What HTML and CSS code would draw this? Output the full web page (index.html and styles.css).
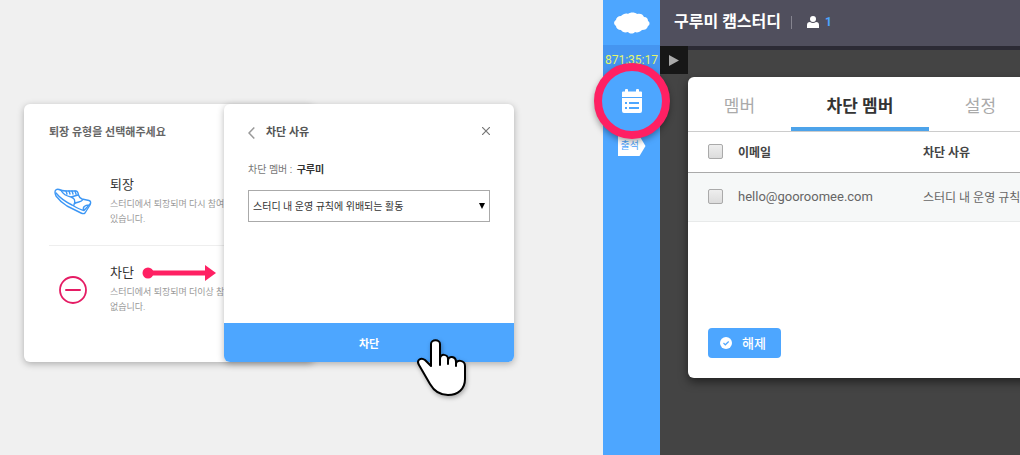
FILE: index.html
```html
<!DOCTYPE html>
<html lang="ko">
<head>
    <meta charset="UTF-8">
    <meta name="viewport" content="width=device-width, initial-scale=1.0">
    <title>구루미 캠스터디</title>
    <link rel="stylesheet" href="styles.css">
</head>
<body>
    <div class="page">
        <section class="guide">
            <div class="card type-card">
                <h2 class="type-title">퇴장 유형을 선택해주세요</h2>
                <div class="type-item">
                    <svg class="type-icon" viewBox="0 0 38 28" fill="none" stroke="#3d97f5" stroke-width="1.4" stroke-linejoin="round" stroke-linecap="round">
                        <path d="M1 4C1 1.500 3 1 5 1.500C8 3 10 3 12 3H22C24 3 24 5 24.500 7C25 9 26 10 28 11L35 12.500C37 13 37 15 36 17L31 25C30 26 29 26 27 25L13 18C8 15 5 12 2 8C1 6 1 5 1 4Z"/>
                        <path d="M2 5C6 10 12 14 18 17C23 20 27 22 30 22.500L36 16M7 2.500C9 6 12 8 17 9C20 10 22 12 20 17M17 9L24 7M30 22.500C28 19 31 17 35 17M20 16C24 13 27 15 29 11.500M12 3L13 6M15 3L16 6M18 3L19 6M21 3L22 6"/>
                    </svg>
                    <div>
                        <h3>퇴장</h3>
                        <p>스터디에서 퇴장되며 다시 참여할 수<br>있습니다.</p>
                    </div>
                </div>
                <div class="type-item">
                    <svg class="type-icon" viewBox="0 0 38 28" fill="none" stroke="#e51c64">
                        <circle cx="19" cy="14" r="13" stroke-width="1.8"/>
                        <path d="M12 14H26" stroke-width="2" stroke-linecap="round"/>
                    </svg>
                    <div>
                        <h3>차단
                            <svg class="arrow" viewBox="0 0 74 16" fill="#ff2063">
                                <circle cx="6" cy="8" r="5.5"/>
                                <path d="M6 5.500H63V0L74 8L63 16V10.500H6Z"/>
                            </svg>
                        </h3>
                        <p>스터디에서 퇴장되며 더이상 참여할 수<br>없습니다.</p>
                    </div>
                </div>
            </div>

            <form class="card reason-card">
                <div class="reason-body">
                    <div class="reason-head">
                        <button type="button" class="icon-btn" aria-label="뒤로">
                            <svg width="7" height="12" viewBox="0 0 7 12" fill="none" stroke="#999" stroke-width="1.5"><path d="M6.300 .5L1 6L6.300 11.500"/></svg>
                        </button>
                        <h2>차단 사유</h2>
                        <button type="button" class="icon-btn close" aria-label="닫기">
                            <svg width="8" height="8" viewBox="0 0 8 8" stroke="#777" stroke-width="1.2"><path d="M0 0L8 8M8 0L0 8"/></svg>
                        </button>
                    </div>
                    <p class="target">차단 멤버 : <strong>구루미</strong></p>
                    <div class="select-box">
                        <select aria-label="차단 사유">
                            <option>스터디 내 운영 규칙에 위배되는 활동</option>
                        </select>
                        <svg class="caret" width="6" height="6" viewBox="0 0 6 6"><path d="M0 0H6L3 6Z"/></svg>
                    </div>
                </div>
                <button type="button" class="block-btn">차단</button>
                <svg class="hand" viewBox="0 0 50 58" fill="#fff" stroke="#000" stroke-width="2" stroke-linejoin="round" stroke-linecap="round">
                    <path d="M14 27V5C14 0 23 0 23 5V26V20C23 14 31 15 31 20V25V22C31 16 39 17 39 23V27V25C39 20 48 21 48 27V40C48 50 41 56 31 56C23 56 17 52 13 45L2 26C-1 21 4 18 8 21Z"/>
                </svg>
            </form>
        </section>

        <section class="app">
            <nav class="sidebar">
                <a href="#" class="logo" aria-label="구루미">
                    <svg width="36" height="22" viewBox="0 0 36 22" fill="#fff">
                        <path d="M7 4C9 2 12 1 14 2C16 0 21 0 23 2C26 1 29 2 30 5C33 5 34 7 34 9C36 10 36 13 34 14C33 17 31 18 28 18C26 20 23 21 21 20C19 22 16 22 14 20C11 21 8 20 7 18C4 18 2 16 2 14C-1 12 0 9 2 8C2 6 4 4 7 4Z"/>
                    </svg>
                </a>
                <div class="timer">871:35:17</div>
                <button type="button" class="calendar" aria-label="일정">
                    <svg width="22" height="24" viewBox="0 0 22 24">
                        <path fill="#fff" d="M1 3.500Q1 2.500 2 2.500H4V1Q4 0 5 0H6Q7 0 7 1V2.500H15V1Q15 0 16 0H17Q18 0 18 1V2.500H20Q21 2.500 21 3.500V8H1ZM1 9H21V22Q21 24 19 24H3Q1 24 1 22Z"/>
                        <path stroke="#4da6ff" stroke-width="2" d="M4 14H6M8 14H18M4 19H6M8 19H18"/>
                    </svg>
                </button>
                <a href="#" class="attend">출석</a>
            </nav>

            <div class="main">
                <header class="topbar">
                    <h1>구루미 캠스터디</h1>
                    <span class="divider"></span>
                    <svg width="12" height="12" viewBox="0 0 12 12" fill="#fff"><circle cx="6" cy="3" r="3"/><path d="M0 12V9Q0 6 3 6Q6 8 9 6Q12 6 12 9V12Z"/></svg>
                    <span class="count">1</span>
                </header>
                <button type="button" class="play" aria-label="재생">
                    <svg width="10" height="11" viewBox="0 0 10 11" fill="#aaa"><path d="M0 0L10 5.500L0 11Z"/></svg>
                </button>

                <div class="modal">
                    <div class="tabs">
                        <button type="button">멤버</button>
                        <button type="button" class="active">차단 멤버</button>
                        <button type="button">설정</button>
                    </div>
                    <table class="members">
                        <thead>
                            <tr>
                                <th class="check"><input type="checkbox" aria-label="전체 선택"></th>
                                <th class="email">이메일</th>
                                <th>차단 사유</th>
                            </tr>
                        </thead>
                        <tbody>
                            <tr>
                                <td class="check"><input type="checkbox" aria-label="hello@gooroomee.com"></td>
                                <td class="email">hello@gooroomee.com</td>
                                <td>스터디 내 운영 규칙에 위배되는 활동</td>
                            </tr>
                        </tbody>
                    </table>
                    <button type="button" class="release">
                        <svg width="12" height="12" viewBox="0 0 12 12"><circle cx="6" cy="6" r="6" fill="#fff"/><path d="M3.500 6L5.300 7.800L8.700 4.500" fill="none" stroke="#4da6ff" stroke-width="1.2"/></svg>
                        해제
                    </button>
                </div>
            </div>
        </section>
    </div>
</body>
</html>
```
FILE: styles.css
```css
* {
    box-sizing: border-box;
}
body {
    margin: 0;
    font-family: Roboto, "Noto Sans CJK KR", sans-serif;
    background-color: #f0f0f0;
    color: #444;
}
h1, h2, h3, p {
    margin: 0;
}
button {
    font-family: inherit;
    border: none;
    padding: 0;
    background: none;
    cursor: pointer;
}
svg {
    display: block;
    flex-shrink: 0;
}
.page {
    display: grid;
    grid-template-columns: 603fr 417fr;
    min-height: 100vh;
    overflow: hidden;
}

/* left: leave / block cards */
.guide {
    display: flex;
    align-items: flex-start;
    padding: 104px 24px 56px;
    min-width: 0;
}
.card {
    flex: 0 0 290px;
    min-height: 258px;
    background-color: #fff;
    border-radius: 6px;
    box-shadow: 0 2px 7px rgba(0,0,0,0.28);
}
.type-card {
    padding: 20px 0 0 25px;
}
.type-title {
    font-size: 11px;
    line-height: 18px;
    font-weight: 700;
    color: #666;
}
.type-item {
    display: flex;
    gap: 18px;
    height: 88px;
    padding-top: 17px;
    padding-left: 5px;
    white-space: nowrap;
}
.type-title + .type-item {
    margin-top: 16px;
    border-bottom: 1px solid #eee;
}
.type-icon {
    width: 38px;
    height: 28px;
    margin-top: 13px;
    overflow: visible;
}
.type-item h3 {
    display: flex;
    align-items: center;
    gap: 8px;
    font-size: 13px;
    line-height: 20px;
    font-weight: 400;
    color: #333;
}
.arrow {
    width: 74px;
    height: 16px;
}
.type-item p {
    margin-top: 2px;
    font-size: 9px;
    line-height: 15px;
    color: #999;
}
.reason-card {
    position: relative;
    display: flex;
    flex-direction: column;
    margin-left: -90px;
}
.reason-body {
    flex: 1;
    padding: 20px 24px;
}
.reason-head {
    display: flex;
    align-items: center;
    gap: 11px;
}
.reason-head h2 {
    font-size: 11px;
    line-height: 18px;
    font-weight: 700;
    color: #555;
}
.reason-head .close {
    margin-left: auto;
    padding: 0 0 4px 0;
}
.target {
    margin-top: 20px;
    font-size: 10px;
    line-height: 16px;
    color: #777;
}
.target strong {
    margin-left: 2px;
    color: #333;
}
.select-box {
    position: relative;
    margin-top: 12px;
}
.select-box select {
    appearance: none;
    width: 100%;
    height: 32px;
    padding: 0 4px;
    border: 1px solid #aaa;
    border-radius: 0;
    background-color: #fff;
    font-family: inherit;
    font-size: 10px;
    color: #333;
}
.caret {
    position: absolute;
    right: 5px;
    top: 13px;
    pointer-events: none;
}
.block-btn {
    height: 39px;
    border-radius: 0 0 6px 6px;
    background-color: #4da6ff;
    color: #fff;
    font-size: 11px;
    font-weight: 700;
}
.hand {
    position: absolute;
    right: 47px;
    bottom: -35px;
    width: 50px;
    height: 58px;
    filter: drop-shadow(1px 2px 2px rgba(0,0,0,0.3));
}

/* right: cam study room */
.app {
    display: flex;
    min-width: 0;
    background-color: #444;
}
.sidebar {
    z-index: 1;
    flex-shrink: 0;
    width: 57px;
    display: flex;
    flex-direction: column;
    align-items: center;
    background-color: #4da6ff;
}
.logo {
    display: flex;
    align-items: center;
    height: 45px;
}
.timer {
    align-self: stretch;
    height: 31px;
    background-color: #4595f0;
    color: #e4f56b;
    font-size: 12px;
    line-height: 30px;
    text-align: center;
}
.calendar {
    z-index: 1;
    display: flex;
    align-items: center;
    justify-content: center;
    flex-shrink: 0;
    width: 76px;
    height: 76px;
    margin: -13px -10px -3px;
    border: 8px solid #ff2063;
    border-radius: 50%;
    background-color: #4da6ff;
    box-shadow: 0 3px 6px rgba(0,0,0,0.35);
}
.attend {
    width: 28px;
    height: 20px;
    padding-left: 3px;
    background-color: #fff;
    clip-path: polygon(0 0, 22px 0, 100% 50%, 22px 100%, 0 100%);
    color: #4da6ff;
    font-size: 10px;
    line-height: 20px;
    text-decoration: none;
}
.main {
    flex: 1;
    min-width: 0;
    overflow: hidden;
}
.topbar {
    display: flex;
    align-items: center;
    height: 46px;
    padding: 0 14px 2px;
    background-color: #504f5d;
    box-shadow: 0 4px 0 #2c2b35;
    color: #fff;
}
.topbar h1 {
    font-size: 16px;
    line-height: 24px;
    font-weight: 700;
}
.divider {
    width: 1px;
    height: 13px;
    margin: 0 15px 0 10px;
    background-color: #85848f;
}
.count {
    margin-left: 6px;
    color: #4da6ff;
    font-size: 12px;
    font-weight: 700;
}
.play {
    position: relative;
    display: flex;
    align-items: center;
    justify-content: center;
    width: 28px;
    height: 28px;
    background-color: #171717;
}
.modal {
    width: 460px;
    min-height: 301px;
    margin: 3px 0 0 28px;
    border-radius: 6px;
    background-color: #fff;
    box-shadow: 0 4px 10px rgba(0,0,0,0.5);
}
.tabs {
    display: flex;
    height: 55px;
    border-bottom: 1px solid #ccc;
}
.tabs button {
    width: 103px;
    height: 54px;
    font-size: 17px;
    color: #aaa;
}
.tabs .active {
    width: 138px;
    border-bottom: 4px solid #4da3ea;
    padding-top: 4px;
    color: #333;
    font-weight: 700;
}
.members {
    width: 100%;
    border-collapse: collapse;
    table-layout: fixed;
    font-size: 12px;
    text-align: left;
}
.members th,
.members td {
    padding: 0;
    white-space: nowrap;
}
.members th {
    height: 40px;
    font-weight: 700;
    border-bottom: 1px solid #aaa;
}
.members td {
    height: 49px;
    background-color: #f6f8f8;
    border-bottom: 1px solid #e8eaea;
    color: #666;
}
.members .check {
    width: 50px;
    padding-left: 20px;
}
.members .email {
    width: 185px;
}
.members td.email {
    font-size: 13px;
}
.members input {
    appearance: none;
    display: block;
    width: 15px;
    height: 15px;
    margin: 0;
    border: 1px solid #aaa;
    border-radius: 2px;
    background: linear-gradient(#eee, #dcdcdc);
}
.release {
    display: flex;
    align-items: center;
    gap: 10px;
    height: 30px;
    margin: 106px 0 0 20px;
    padding: 0 15px 0 12px;
    border-radius: 4px;
    background-color: #4da6ff;
    color: #fff;
    font-size: 13px;
    font-weight: 500;
}
```
